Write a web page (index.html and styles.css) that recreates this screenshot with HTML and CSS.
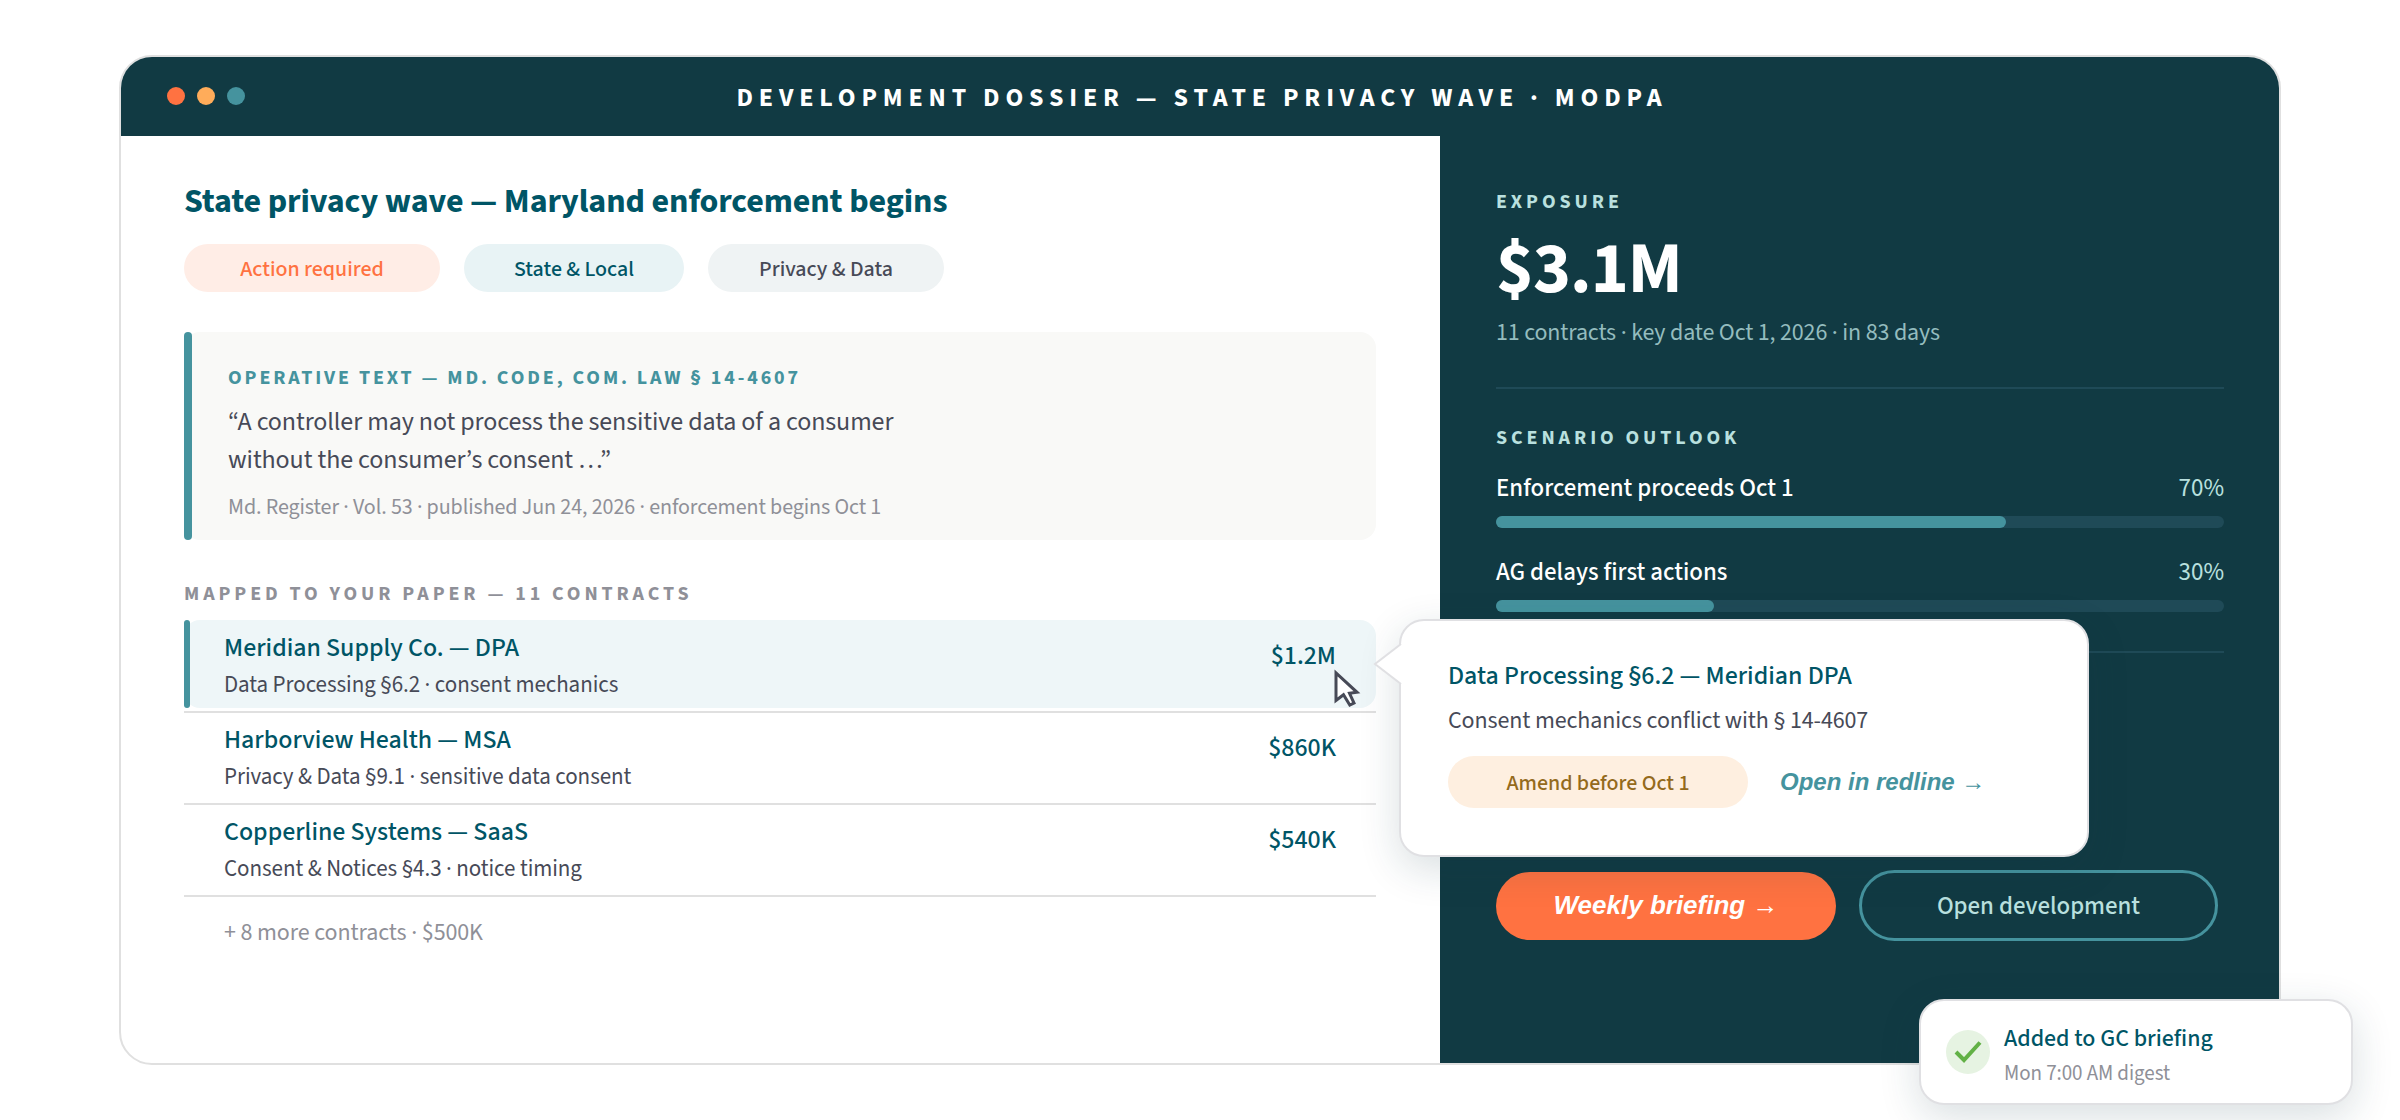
FILE: index.html
```html
<!DOCTYPE html>
<html lang="en">
<head>
    <meta charset="UTF-8">
    <meta name="viewport" content="width=device-width, initial-scale=1.0">
    <title>Development Dossier</title>
    <link rel="stylesheet" href="styles.css">
</head>
<body>

    <div class="window">
        <header class="titlebar">
            <div class="dots">
                <span class="dot dot-red"></span>
                <span class="dot dot-amber"></span>
                <span class="dot dot-teal"></span>
            </div>
            <div class="window-title">DEVELOPMENT DOSSIER — STATE PRIVACY WAVE · MODPA</div>
        </header>

        <div class="content">
            <main class="dossier">
                <h1>State privacy wave — Maryland enforcement begins</h1>

                <div class="tags">
                    <span class="tag tag-action">Action required</span>
                    <span class="tag tag-state">State &amp; Local</span>
                    <span class="tag tag-privacy">Privacy &amp; Data</span>
                </div>

                <section class="operative">
                    <h2>OPERATIVE TEXT — MD. CODE, COM. LAW § 14-4607</h2>
                    <blockquote>“A controller may not process the sensitive data of a consumer<br>without the consumer’s consent …”</blockquote>
                    <p class="source">Md. Register · Vol. 53 · published Jun 24, 2026 · enforcement begins Oct 1</p>
                </section>

                <h2 class="list-title">MAPPED TO YOUR PAPER — 11 CONTRACTS</h2>
                <ul class="contracts">
                    <li>
                        <div class="contract active">
                            <div>
                                <div class="name">Meridian Supply Co. — DPA</div>
                                <div class="clause">Data Processing §6.2 · consent mechanics</div>
                            </div>
                            <div class="amount">$1.2M</div>
                        </div>
                    </li>
                    <li>
                        <div class="contract">
                            <div>
                                <div class="name">Harborview Health — MSA</div>
                                <div class="clause">Privacy &amp; Data §9.1 · sensitive data consent</div>
                            </div>
                            <div class="amount">$860K</div>
                        </div>
                    </li>
                    <li>
                        <div class="contract">
                            <div>
                                <div class="name">Copperline Systems — SaaS</div>
                                <div class="clause">Consent &amp; Notices §4.3 · notice timing</div>
                            </div>
                            <div class="amount">$540K</div>
                        </div>
                    </li>
                </ul>
                <p class="more">+ 8 more contracts · $500K</p>
            </main>

            <aside class="exposure">
                <h2>EXPOSURE</h2>
                <div class="total">$3.1M</div>
                <p class="total-note">11 contracts · key date Oct 1, 2026 · in 83 days</p>
                <hr>
                <h2 class="outlook-title">SCENARIO OUTLOOK</h2>
                <div class="scenario">
                    <div class="scenario-label"><span>Enforcement proceeds Oct 1</span><span class="percent">70%</span></div>
                    <div class="bar"><div class="bar-fill" style="width: 70%"></div></div>
                </div>
                <div class="scenario">
                    <div class="scenario-label"><span>AG delays first actions</span><span class="percent">30%</span></div>
                    <div class="bar"><div class="bar-fill" style="width: 30%"></div></div>
                </div>
                <hr class="last">
                <div class="actions">
                    <button class="btn btn-primary">Weekly briefing <span class="arrow">→</span></button>
                    <button class="btn btn-outline">Open development</button>
                </div>
            </aside>
        </div>
    </div>

    <!-- Clause popover -->
    <div class="popover">
        <svg class="popover-tip" width="30" height="44" viewBox="0 0 30 44">
            <path d="M28 2 L2 22 L28 42" fill="#fff" stroke="#e0e0e3" stroke-width="2"/>
        </svg>
        <div class="popover-title">Data Processing §6.2 — Meridian DPA</div>
        <p>Consent mechanics conflict with § 14-4607</p>
        <div class="popover-actions">
            <span class="tag tag-amend">Amend before Oct 1</span>
            <a class="redline">Open in redline <span class="arrow">→</span></a>
        </div>
    </div>

    <!-- Mouse pointer -->
    <svg class="pointer" width="32" height="44" viewBox="0 0 32 44">
        <path d="M4 5 V32.5 L11.5 26.8 L17.8 37 L22 35 L17.5 25.3 L25 24.3 Z" fill="#fff" stroke="#474a57" stroke-width="3"/>
    </svg>

    <!-- Toast -->
    <div class="toast">
        <svg width="44" height="44" viewBox="0 0 44 44">
            <circle cx="22" cy="22" r="22" fill="#e6f3e2"/>
            <path d="M10 22 L18 30 L34 12.5" fill="none" stroke="#62b146" stroke-width="4"/>
        </svg>
        <div>
            <div class="toast-title">Added to GC briefing</div>
            <div class="toast-note">Mon 7:00 AM digest</div>
        </div>
    </div>

</body>
</html>
```
FILE: styles.css
```css
* {
    box-sizing: border-box;
}

body {
    position: relative;
    width: 2400px;
    height: 1120px;
    margin: 0;
    padding: 55px 119px;
    overflow: hidden;
    background-color: #fff;
    color: #474a57;
    font-family: "Source Sans 3", "Noto Sans CJK JP", "Noto Sans", sans-serif;
}

h1, h2, p, ul, blockquote {
    margin: 0;
    padding: 0;
}

.window {
    display: flex;
    flex-direction: column;
    width: 2162px;
    height: 1010px;
    border: 2px solid #e0e0e0;
    border-radius: 33px;
    overflow: hidden;
}

/* Title bar */
.titlebar {
    display: grid;
    grid-template-columns: 200px 1fr 200px;
    align-items: center;
    height: 79px;
    padding: 0 46px;
    background-color: #113a43;
}

.dots {
    display: flex;
    gap: 12px;
    margin-bottom: 1px;
}

.dot {
    width: 18px;
    height: 18px;
    border-radius: 50%;
}

.dot-red {
    background-color: #ff7241;
}

.dot-amber {
    background-color: #ffac5a;
}

.dot-teal {
    background-color: #45939e;
}

.window-title {
    padding: 2px 0 0 4px;
    color: #fff;
    font-size: 26px;
    font-weight: 700;
    line-height: 37px;
    letter-spacing: 5.86px;
    text-align: center;
    white-space: nowrap;
}

.content {
    display: grid;
    grid-template-columns: 1319px 1fr;
    flex: 1;
}

/* Left side */
.dossier {
    padding: 43px 64px 0 63px;
}

h1 {
    color: #005566;
    font-size: 34px;
    font-weight: 700;
    line-height: 45px;
    letter-spacing: -0.11px;
}

h2 {
    font-size: 20px;
    font-weight: 700;
    line-height: 30px;
    letter-spacing: 3.9px;
}

.tags {
    display: flex;
    gap: 24px;
    margin-top: 20px;
}

.tag {
    height: 48px;
    border-radius: 24px;
    font-size: 22px;
    font-weight: 500;
    line-height: 50px;
    text-align: center;
}

.tag-action {
    width: 256px;
    background-color: #ffede6;
    color: #ff7241;
}

.tag-state {
    width: 220px;
    background-color: #e8f3f5;
    color: #005566;
}

.tag-privacy {
    width: 236px;
    background-color: #eff3f4;
}

.operative {
    position: relative;
    height: 208px;
    margin-top: 40px;
    padding: 31px 44px 0;
    border-radius: 16px;
    background-color: #f9f9f7;
}

.operative::before,
.contract.active::before {
    content: "";
    position: absolute;
    top: 0;
    bottom: 0;
    left: 0;
    width: 8px;
    border-radius: 4px;
    background-color: #45939e;
}

.operative h2 {
    color: #45939e;
    letter-spacing: 2.9px;
}

blockquote {
    margin-top: 10px;
    font-size: 26px;
    line-height: 38px;
    letter-spacing: -0.1px;
}

.source {
    margin-top: 13px;
    color: #8f9098;
    font-size: 22px;
    line-height: 30px;
    letter-spacing: -0.09px;
}

.list-title {
    margin: 39px 0 11px;
    color: #8f9098;
}

.contracts {
    list-style: none;
}

.contracts li {
    margin-bottom: -1px;
    padding-bottom: 3px;
    border-bottom: 2px solid #e0e0e0;
}

.contract {
    position: relative;
    display: flex;
    justify-content: space-between;
    height: 88px;
    padding: 8px 40px 0;
    border-radius: 16px;
}

.contract.active {
    background-color: #eef6f8;
}

.contract.active::before {
    width: 6px;
    border-radius: 3px;
}

.name,
.amount {
    color: #005566;
    font-size: 26px;
    font-weight: 500;
    line-height: 39px;
}

.amount {
    margin-top: 8px;
}

.clause {
    margin-top: 2px;
    font-size: 23px;
    line-height: 31px;
    letter-spacing: -0.06px;
}

.more {
    margin-top: 20px;
    padding-left: 40px;
    color: #8f9098;
    font-size: 24px;
    line-height: 33px;
    letter-spacing: -0.1px;
}

/* Right side */
.exposure {
    padding: 51px 55px 0 56px;
    background-color: #113a43;
    color: #fff;
}

.exposure h2 {
    color: #b9e0df;
}

.total {
    margin-top: 7px;
    font-size: 72px;
    font-weight: 700;
    line-height: 91px;
    letter-spacing: -1px;
}

.total-note {
    color: #94bcbe;
    font-size: 24px;
    line-height: 35px;
    letter-spacing: -0.15px;
}

hr {
    height: 2px;
    margin: 37px 0 0;
    border: 0;
    background-color: #1f4a57;
}

.exposure .outlook-title {
    margin: 34px 0 17px;
}

.scenario {
    margin-bottom: 26px;
}

.scenario-label {
    display: flex;
    justify-content: space-between;
    font-size: 25px;
    font-weight: 500;
    line-height: 36px;
}

.percent {
    color: #b9e0df;
    font-weight: 400;
}

.bar {
    height: 12px;
    margin-top: 10px;
    border-radius: 6px;
    background-color: #1f4a57;
}

.bar-fill {
    height: 12px;
    border-radius: 6px;
    background-color: #45939e;
}

hr.last {
    margin-top: 39px;
}

.actions {
    display: flex;
    align-items: center;
    gap: 23px;
    margin-top: 218px;
}

.btn {
    padding: 0;
    border: 0;
    font-family: inherit;
    text-align: center;
    white-space: nowrap;
}

.btn-primary {
    width: 340px;
    height: 68px;
    padding-bottom: 1px;
    border-radius: 34px;
    background-color: #ff7241;
    color: #fff;
    font-family: "Liberation Sans", Arial, sans-serif;
    font-size: 26px;
    font-style: italic;
    font-weight: 700;
}

.btn-outline {
    width: 359px;
    height: 71px;
    margin: -1px 0;
    border: 3px solid #45939e;
    border-radius: 36px;
    background-color: transparent;
    color: #b9e0df;
    font-size: 25px;
    font-weight: 500;
}

/* Popover over the panels */
.popover {
    position: absolute;
    top: 619px;
    left: 1399px;
    width: 690px;
    height: 238px;
    padding: 35px 47px 0;
    border: 2px solid #e0e0e3;
    border-radius: 25px;
    background-color: #fff;
    box-shadow: 0 12px 40px rgba(17, 58, 67, 0.16);
}

.popover-tip {
    position: absolute;
    top: 21px;
    left: -28px;
}

.popover-title {
    color: #005566;
    font-size: 26px;
    font-weight: 500;
    line-height: 39px;
}

.popover p {
    margin-top: 8px;
    font-size: 24px;
    line-height: 35px;
    letter-spacing: -0.11px;
}

.popover-actions {
    display: flex;
    align-items: center;
    gap: 32px;
    margin-top: 18px;
}

.tag-amend {
    width: 300px;
    height: 52px;
    border-radius: 26px;
    background-color: #feefe0;
    color: #946a1c;
    line-height: 54px;
}

.redline {
    color: #45939e;
    font-family: "Liberation Sans", Arial, sans-serif;
    font-size: 24px;
    font-style: italic;
    font-weight: 700;
}

.pointer {
    position: absolute;
    top: 668px;
    left: 1332px;
}

.toast {
    position: absolute;
    top: 999px;
    left: 1919px;
    display: flex;
    gap: 14px;
    width: 434px;
    height: 106px;
    padding: 18px 25px;
    border: 2px solid #e0e0e3;
    border-radius: 25px;
    background-color: #fff;
    box-shadow: 0 12px 40px rgba(17, 58, 67, 0.16);
}

.toast svg {
    margin-top: 11px;
}

.toast-title {
    color: #005566;
    font-size: 24px;
    font-weight: 500;
    line-height: 39px;
}

.toast-note {
    margin-top: 1px;
    color: #8f9098;
    font-size: 21px;
    line-height: 28px;
    letter-spacing: -0.05px;
}
```
